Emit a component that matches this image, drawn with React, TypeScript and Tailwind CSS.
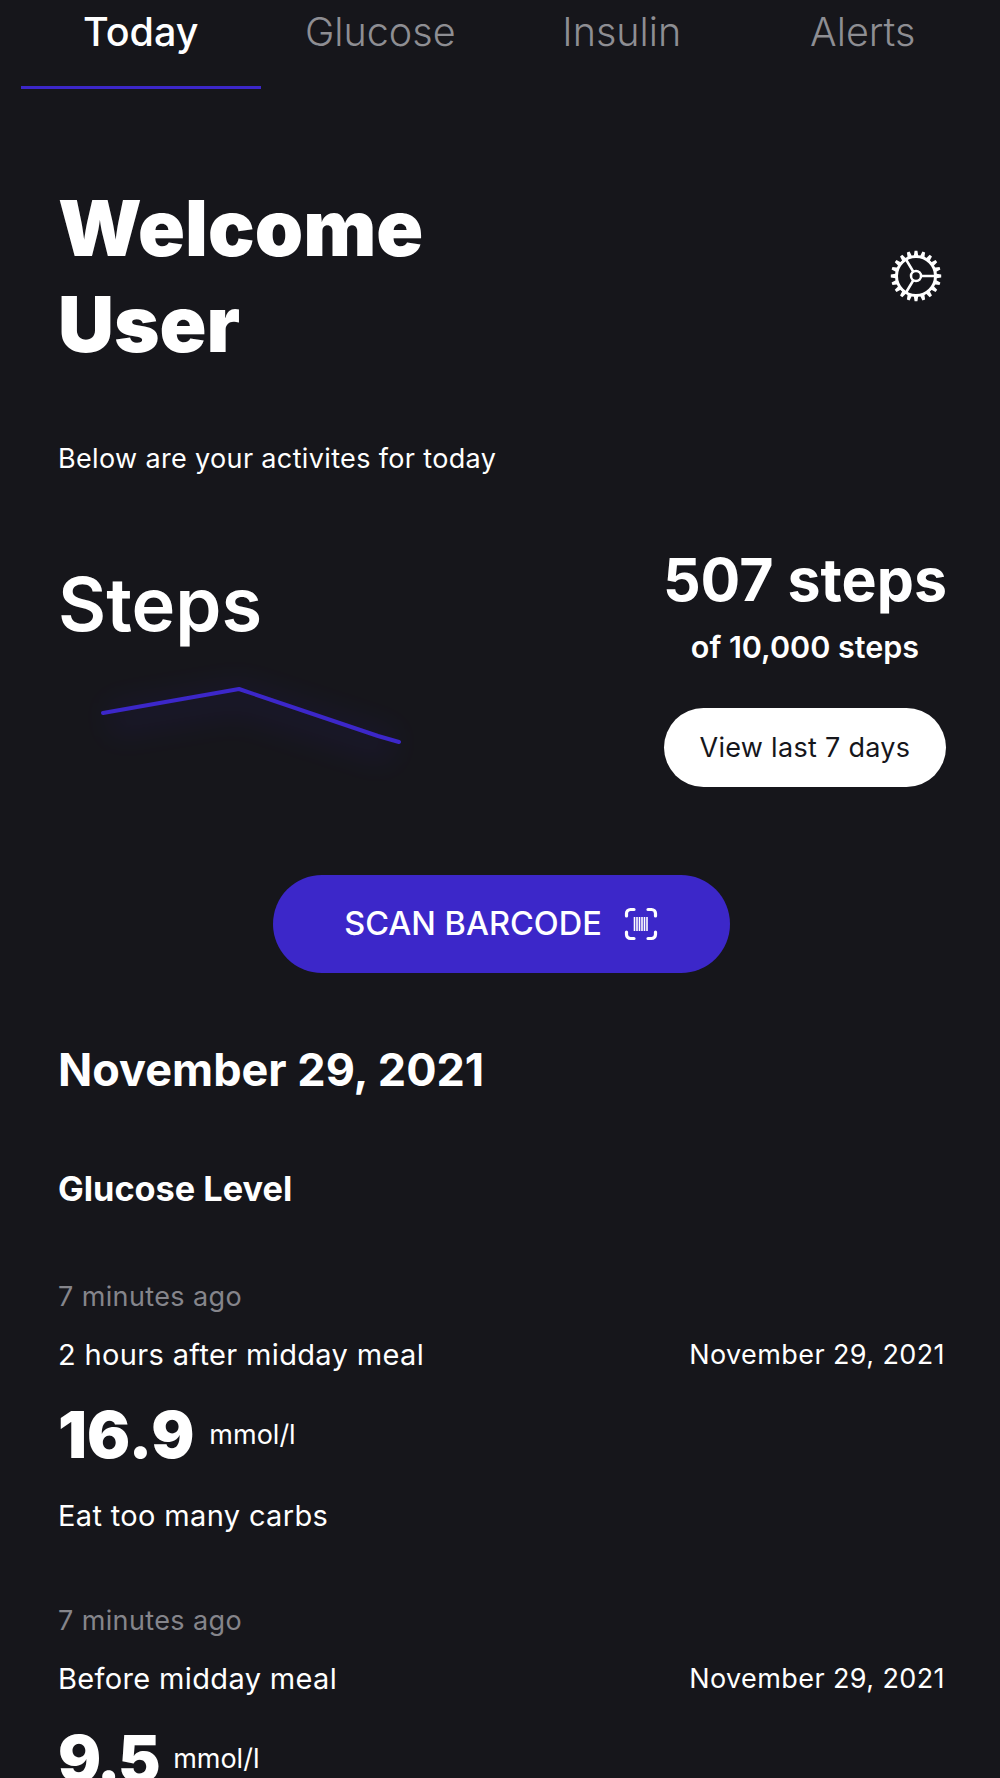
import React from 'react';

const Gear = () => {
  const teeth = Array.from({ length: 20 }, (_, i) => i * 18);
  return (
    <svg width="52" height="52" viewBox="0 0 52 52" fill="none" stroke="#fff">
      {teeth.map((a) => (
        <path key={a} d="M23.6 7L24.6 0.800h2.800L28.400 7Z" fill="#fff" stroke="none" transform={`rotate(${a} 26 26)`} />
      ))}
      <circle cx="26" cy="26" r="19.500" strokeWidth="3" />
      <circle cx="26" cy="26" r="5" strokeWidth="2.500" />
      <path d="M31 26H45M23.200 21.500L16 9.500M23.200 30.500L16 42.500" strokeWidth="2.500" />
    </svg>
  );
};

const Barcode = () => (
  <svg width="34" height="34" viewBox="0 0 34 34" fill="none" stroke="#fff" strokeWidth="3.200" strokeLinecap="round">
    <path d="M2.500 9V6.500a4 4 0 0 1 4-4H10M24 2.500h3.500a4 4 0 0 1 4 4V9M31.500 25v2.500a4 4 0 0 1-4 4H24M10 31.500H6.500a4 4 0 0 1-4-4V25" />
    <path d="M10.500 10v14M13 10v14M15.500 10v14M18 10v14M20.500 10v14M23 10v14" strokeWidth="1.600" strokeLinecap="butt" />
  </svg>
);

const Chart = () => (
  <svg width="360" height="100" viewBox="0 0 360 100" fill="none" className="overflow-visible">
    <defs>
      <filter id="glow" x="-40%" y="-200%" width="180%" height="500%">
        <feGaussianBlur stdDeviation="14" />
      </filter>
    </defs>
    <path d="M52 52L182 30L321 75L336 79" stroke="#3c27c9" strokeWidth="34" strokeLinejoin="round" opacity="0.08" filter="url(#glow)" />
    <path d="M46 44L182 20L321 67L342 73" stroke="#3c27c9" strokeWidth="4" strokeLinecap="round" strokeLinejoin="round" />
  </svg>
);

const Reading = ({ label, value, note, tight }: { label: string; value: string; note?: string; tight?: boolean }) => (
  <div className="mb-[73px]">
    <p className="text-[27px] leading-[32px] tracking-[0.38px] text-[#85858b]">7 minutes ago</p>
    <div className="mr-[-3px] mt-[26px] flex items-center justify-between text-white">
      <p className="text-[29px] leading-[32px] tracking-[0.35px]">{label}</p>
      <p className="text-[27px] leading-[32px] tracking-[0.4px]">November 29, 2021</p>
    </div>
    <div className="mt-[28px] flex items-center">
      <span className={tight ? 'text-[64px] leading-[72px] font-black tracking-[-2.500px] text-white' : 'text-[64px] leading-[72px] font-black text-white'}>{value}</span>
      <span className="ml-[15px] text-[27px] leading-[32px] text-white">mmol/l</span>
    </div>
    {note && <p className="mt-[29px] text-[29px] leading-[32px] tracking-[0.35px] text-white">{note}</p>}
  </div>
);

export default function App() {
  return (
    <div className="h-[1778px] w-[1000px] overflow-hidden bg-[#16161b] font-['Inter',sans-serif] text-white">
      <div className="mx-[21px] flex h-[89px] text-[39.500px] leading-[64px]">
        <div className="w-[240px] border-b-[3px] border-[#3c27c9] text-center font-medium">Today</div>
        <div className="w-[240px] text-center font-light text-[#8e8e93]">Glucose</div>
        <div className="w-[240px] pl-[4px] text-center font-light text-[#8e8e93]">Insulin</div>
        <div className="w-[240px] pl-[7px] text-center font-light text-[#8e8e93]">Alerts</div>
      </div>

      <div className="px-[58px]">
        <div className="mt-[91px] flex items-center justify-between">
          <h1 className="text-[77.500px] leading-[96px] font-black">
            Welcome
            <br />
            User
          </h1>
          <Gear />
        </div>

        <p className="mt-[70px] text-[27px] leading-[34px] tracking-[0.35px]">Below are your activites for today</p>

        <div className="mr-[-5px] mt-[74px] flex justify-between">
          <div className="pt-[9px]">
            <h2 className="text-[74px] leading-[90px] font-semibold">Steps</h2>
            <div className="ml-[-1px] mt-[20px]">
              <Chart />
            </div>
          </div>
          <div className="flex flex-col items-center">
            <p className="mt-[-2px] text-[59px] leading-[64px] font-bold">507 steps</p>
            <p className="mt-[17px] text-[30.500px] leading-[36px] font-semibold">of 10,000 steps</p>
            <div className="mt-[43px] flex h-[79px] w-[282px] items-center justify-center rounded-full bg-white pt-[1px] text-[27px] tracking-[0.3px] text-[#16161b]">
              View last 7 days
            </div>
          </div>
        </div>

        <div className="ml-[2px] mt-[88px] flex justify-center">
          <div className="flex h-[98px] w-[457px] items-center justify-center gap-[22px] rounded-full bg-[#3c27c9] text-[32.500px] font-[550]">
            SCAN BARCODE
            <Barcode />
          </div>
        </div>

        <h3 className="mt-[71px] text-[45px] leading-[52px] font-bold">November 29, 2021</h3>
        <h4 className="mt-[73px] text-[34.300px] leading-[40px] font-bold">Glucose Level</h4>

        <div className="mt-[72px]">
          <Reading label="2 hours after midday meal" value="16.9" note="Eat too many carbs" />
          <Reading label="Before midday meal" value="9.5" tight />
        </div>
      </div>
    </div>
  );
}
